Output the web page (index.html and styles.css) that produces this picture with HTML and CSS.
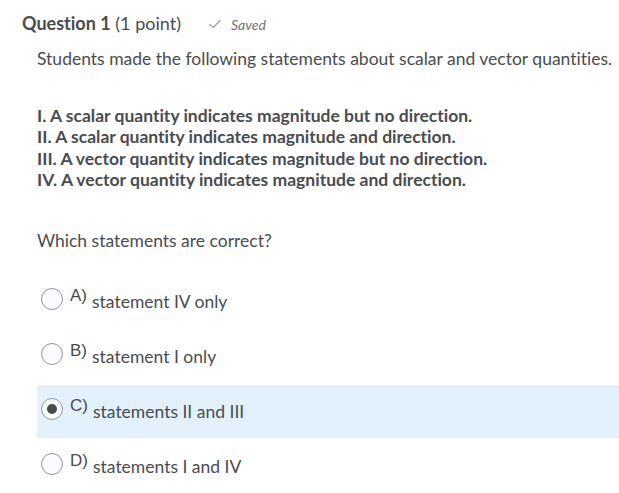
FILE: index.html
```html
<!DOCTYPE html>
<html lang="en">
<head>
    <meta charset="UTF-8">
    <meta name="viewport" content="width=device-width, initial-scale=1.0">
    <title>Question 1</title>
    <link rel="stylesheet" href="styles.css">
</head>
<body>
    <div class="question">
        <div class="header">
            <span class="title"><b>Question 1</b> (1 point)</span>
            <span class="saved">
                <svg width="12" height="10" viewBox="0 0 12 10"><path d="M1 5.5 L4.2 8.5 L11 1.5" fill="none" stroke="#a5a9ac" stroke-width="1.6" stroke-linecap="round" stroke-linejoin="round"/></svg>
                <i>Saved</i>
            </span>
        </div>
        <div class="body">
            <p class="intro">Students made the following statements about scalar and vector quantities.</p>
            <div class="statements">
                I. A scalar quantity indicates magnitude but no direction.<br>
                II. A scalar quantity indicates magnitude and direction.<br>
                III. A vector quantity indicates magnitude but no direction.<br>
                IV. A vector quantity indicates magnitude and direction.
            </div>
            <p class="ask">Which statements are correct?</p>
            <div class="options">
                <label class="option">
                    <span class="radio"></span>
                    <span class="letter">A)</span>
                    <span class="text">statement IV only</span>
                </label>
                <label class="option">
                    <span class="radio"></span>
                    <span class="letter">B)</span>
                    <span class="text">statement I only</span>
                </label>
                <label class="option selected">
                    <span class="radio"></span>
                    <span class="letter">C)</span>
                    <span class="text">statements II and III</span>
                </label>
                <label class="option">
                    <span class="radio"></span>
                    <span class="letter">D)</span>
                    <span class="text">statements I and IV</span>
                </label>
            </div>
        </div>
    </div>
</body>
</html>
```

FILE: styles.css
```css
body {
    margin: 0;
    padding: 0;
    background: #ffffff;
    color: #494c4e;
    font-family: Lato, "Open Sans", sans-serif;
    font-variant-ligatures: none;
}

.question {
    padding-top: 12px;
}

.header {
    display: flex;
    align-items: baseline;
    padding-left: 22px;
    height: 24px;
}

.title {
    font-size: 18px;
}

.saved {
    margin-left: 28px;
    font-size: 14px;
    color: #6e7376;
    display: flex;
    align-items: center;
    gap: 10px;
    position: relative;
    top: -1px;
}

.body {
    padding-left: 37px;
}

.intro {
    font-size: 17.5px;
    margin: 12px 0 0 0;
    line-height: 22px;
}

.statements {
    margin-top: 35px;
    font-size: 17.5px;
    font-weight: bold;
    line-height: 21.3px;
}

.ask {
    font-size: 17.5px;
    margin: 40px 0 0 0;
    line-height: 22px;
}

.options {
    margin-top: 23px;
    display: flex;
    flex-direction: column;
}

.option {
    display: flex;
    align-items: center;
    height: 53px;
    padding-bottom: 6px;
    box-sizing: border-box;
    margin-bottom: 2px;
}

.option.selected {
    background: #e3f1fd;
}

.radio {
    width: 20px;
    height: 20px;
    margin-left: 4px;
    border: 1px solid #8f9598;
    border-radius: 50%;
    background: #f9fbff;
    position: relative;
}

.selected .radio::after {
    content: "";
    position: absolute;
    left: 5px;
    top: 5px;
    width: 10px;
    height: 10px;
    border-radius: 50%;
    background: #494c4e;
}

.letter {
    margin-left: 7px;
    font-family: "Liberation Sans", Arial, sans-serif;
    font-size: 17px;
    position: relative;
    top: -3px;
}

.text {
    margin-left: 5px;
    font-size: 17.5px;
    position: relative;
    top: 3px;
}
```
